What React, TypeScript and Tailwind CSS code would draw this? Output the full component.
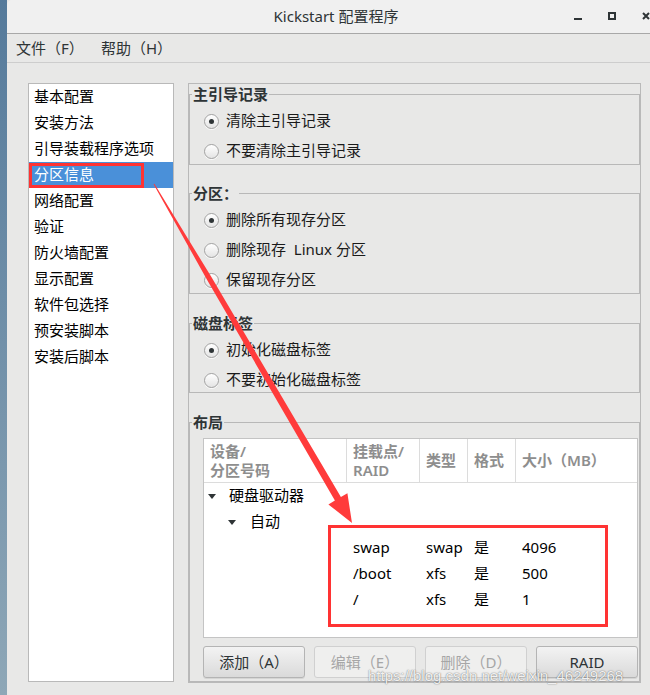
import React from "react";

const navItems = [
  "基本配置",
  "安装方法",
  "引导装载程序选项",
  "分区信息",
  "网络配置",
  "验证",
  "防火墙配置",
  "显示配置",
  "软件包选择",
  "预安装脚本",
  "安装后脚本",
];

function Radio({ checked, label }: { checked?: boolean; label: string }) {
  return (
    <div className="flex items-center h-[24px] gap-[7px] text-[#1a1a1a]">
      <span className="w-[15px] h-[15px] rounded-full border border-[#a2a2a2] bg-linear-to-b from-white to-[#e4e4e4] flex items-center justify-center shadow-[0_1px_0_rgba(255,255,255,0.8)]">
        {checked && <span className="w-[5px] h-[5px] rounded-full bg-[#2e3436]" />}
      </span>
      <span className="whitespace-pre pb-[2px]">{label}</span>
    </div>
  );
}

function Frame({
  title,
  className,
  children,
}: {
  title: string;
  className?: string;
  children: React.ReactNode;
}) {
  return (
    <fieldset className={"border border-[#b8b8b8] p-0 m-0 " + (className || "")}>
      <legend className="ml-[2px] px-[1px] font-bold leading-[18px] text-[#2e3436]">
        {title}
      </legend>
      {children}
    </fieldset>
  );
}

const cols = "grid grid-cols-[143px_73px_48px_48px_1fr]";

function Tri() {
  return (
    <span className="w-0 h-0 border-l-[4px] border-r-[4px] border-t-[5px] border-l-transparent border-r-transparent border-t-[#2e3436]" />
  );
}

function Btn({ label, disabled }: { label: string; disabled?: boolean }) {
  return disabled ? (
    <div className="h-[32px] rounded-[3px] border border-[#d0d0d0] bg-[#efefee] text-[#a6a6a6] flex items-center justify-center">
      {label}
    </div>
  ) : (
    <div className="h-[32px] rounded-[3px] border border-[#b4b4b4] bg-linear-to-b from-[#f3f3f3] to-[#dadada] text-[#2e3436] flex items-center justify-center shadow-[0_1px_0_rgba(0,0,0,0.08)]">
      {label}
    </div>
  );
}

export default function App() {
  const rows = [
    ["swap", "swap", "是", "4096"],
    ["/boot", "xfs", "是", "500"],
    ["/", "xfs", "是", "1"],
  ];
  return (
    <div className="relative w-[650px] h-[695px] flex overflow-hidden bg-[#e8e8e7] text-[15px] font-['Noto_Sans','Noto_Sans_CJK_SC',sans-serif]">
      <div className="w-[7px] shrink-0 bg-linear-to-b from-[#557a9b] to-[#8ea7b7]" />
      <div className="flex-1 flex flex-col bg-[#e8e8e7] rounded-tl-[5px] overflow-hidden">
        {/* Title bar */}
        <div className="h-[34px] shrink-0 border-b border-[#a8a8a8] bg-[#f0f0f0] grid grid-cols-1 items-center">
          <div className="col-start-1 row-start-1 justify-self-center pl-[15px] text-[#2e3436] leading-none">
            Kickstart 配置程序
          </div>
          <div className="col-start-1 row-start-1 justify-self-end flex items-center mb-[1px]">
            <span className="flex items-end h-[8px] w-[8px]">
              <span className="block w-[8px] h-[2px] bg-[#2e3436]" />
            </span>
            <span className="ml-[26px] block w-[8px] h-[8px] border-2 border-[#2e3436]" />
            <svg className="ml-[26px]" width="8" height="8" viewBox="0 0 8 8">
              <path d="M1 1 L7 7 M7 1 L1 7" stroke="#2e3436" strokeWidth="2" />
            </svg>
          </div>
        </div>
        {/* Menu bar */}
        <div className="h-[29px] shrink-0 border-b border-[#cdcdcd] flex items-center pl-[9px] text-[#2e3436]">
          <span className="w-[85px]">文件（F）</span>
          <span>帮助（H）</span>
        </div>
        {/* Content */}
        <div className="flex items-start pt-[20px] pl-[21px] gap-[14px]">
          <div className="w-[146px] h-[599px] shrink-0 border border-[#b9b9b9] bg-white">
            {navItems.map((n, i) => (
              <div
                key={n}
                className={
                  "h-[26px] flex items-center pl-[5px] pb-[2px] " +
                  (i === 3 ? "bg-[#4a90d9] text-white" : "text-black")
                }
              >
                {n}
              </div>
            ))}
          </div>
          <div className="w-[453px] shrink-0 border border-[#b9b9b9] flex flex-col">
            <Frame title="主引导记录" className="mt-[1px]">
              <div className="pl-[14px] pt-[6px] pb-[1px] flex flex-col gap-[6px]">
                <Radio checked label="清除主引导记录" />
                <Radio label="不要清除主引导记录" />
              </div>
            </Frame>
            <Frame title="分区：" className="mt-[19px]">
              <div className="pl-[14px] pt-[6px] pb-[1px] flex flex-col gap-[6px]">
                <Radio checked label="删除所有现存分区" />
                <Radio label="删除现存  Linux 分区" />
                <Radio label="保留现存分区" />
              </div>
            </Frame>
            <Frame title="磁盘标签" className="mt-[20px]">
              <div className="pl-[14px] pt-[6px] flex flex-col gap-[6px]">
                <Radio checked label="初始化磁盘标签" />
                <Radio label="不要初始化磁盘标签" />
              </div>
            </Frame>
            <Frame title="布局" className="mt-[20px]">
              <div className="pl-[13px] pr-[1px] pt-[7px] pb-[3px] flex flex-col">
                <div className="h-[200px] border border-[#c4c4c4] bg-white flex flex-col">
                  <div className={cols + " h-[44px] border-b border-[#dcdcdc] text-[#8e8e8e] font-semibold leading-[19px]"}>
                    <div className="border-r border-[#dcdcdc] px-[6px] flex flex-col justify-center">
                      <span>设备/</span>
                      <span>分区号码</span>
                    </div>
                    <div className="border-r border-[#dcdcdc] px-[6px] flex flex-col justify-center">
                      <span>挂载点/</span>
                      <span>RAID</span>
                    </div>
                    <div className="border-r border-[#dcdcdc] px-[6px] flex items-center">类型</div>
                    <div className="border-r border-[#dcdcdc] px-[6px] flex items-center">格式</div>
                    <div className="px-[6px] flex items-center">大小（MB）</div>
                  </div>
                  <div className="flex flex-col text-black">
                    <div className="h-[26px] flex items-center pl-[4px] gap-[13px]">
                      <Tri />
                      <span className="pb-[2px]">硬盘驱动器</span>
                    </div>
                    <div className="h-[26px] flex items-center pl-[24px] gap-[14px]">
                      <Tri />
                      <span className="pb-[2px]">自动</span>
                    </div>
                    {rows.map((r) => (
                      <div key={r[0]} className={cols + " h-[26px] items-center"}>
                        <span />
                        {r.map((c, j) => (
                          <span key={j} className="px-[6px] pb-[2px]">
                            {c}
                          </span>
                        ))}
                      </div>
                    ))}
                  </div>
                </div>
                <div className="mt-[8px] grid grid-cols-4 gap-[9px]">
                  <Btn label="添加（A）" />
                  <Btn label="编辑（E）" disabled />
                  <Btn label="删除（D）" disabled />
                  <Btn label="RAID" />
                </div>
              </div>
            </Frame>
          </div>
        </div>
      </div>

      {/* Annotation overlays */}
      <div className="absolute left-[29px] top-[163px] w-[115px] h-[25px] border-[3px] border-[#ff3333] pointer-events-none" />
      <div className="absolute left-[328px] top-[525px] w-[280px] h-[102px] border-[3px] border-[#ff3333] pointer-events-none" />
      <svg
        className="absolute left-0 top-0 pointer-events-none"
        width="650"
        height="695"
        viewBox="0 0 650 695"
      >
        <polygon
          points="153.6,184.3 207.0,279.7 334.9,500.6 328.4,504.4 352,523 347.4,493.3 340.9,497.0 211.4,277.1 154.4,183.7"
          fill="#ff3b3b"
        />
      </svg>
      <div className="absolute left-[368px] top-[666px] leading-[20px] text-[15px] font-['Liberation_Sans',sans-serif] text-white/90 [text-shadow:0_0_1px_rgba(0,0,0,0.5),0_0_2px_rgba(0,0,0,0.25)] whitespace-nowrap pointer-events-none">
        https://blog.csdn.net/weixin_46249268
      </div>
    </div>
  );
}
